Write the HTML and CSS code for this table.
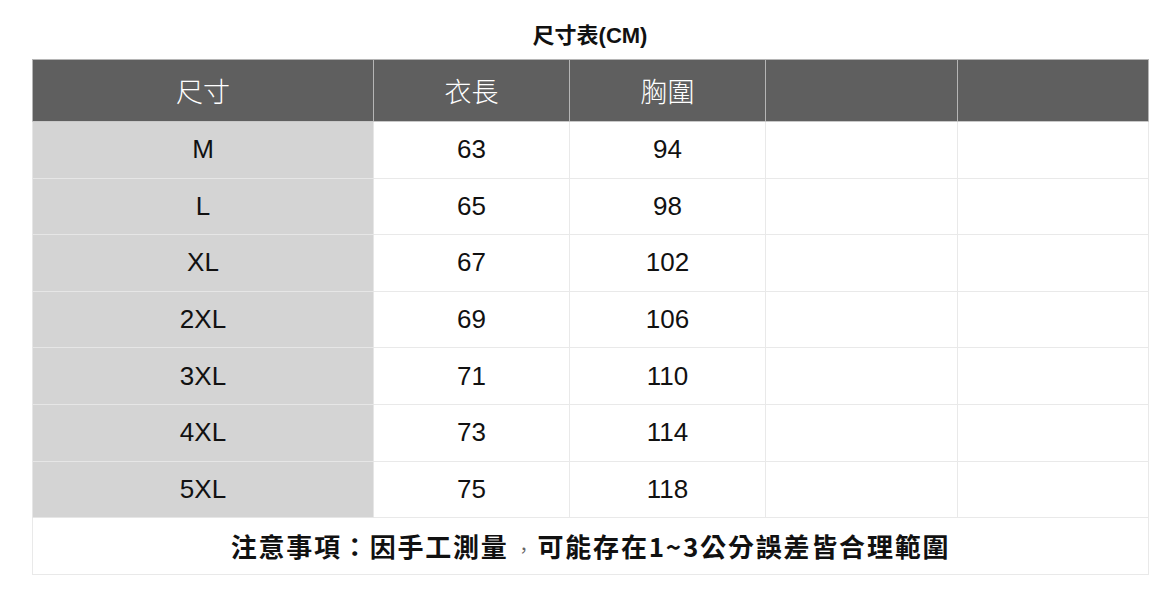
FILE: index.html
```html
<!DOCTYPE html>
<html lang="zh-Hant">
<head>
<meta charset="utf-8">
<link rel="stylesheet" href="styles.css">
</head>
<body>
<div class="page">
  <div class="title">尺寸表(CM)</div>
  <table class="size-table">
    <colgroup>
      <col class="c1"><col class="c2"><col class="c3"><col class="c4"><col class="c5">
    </colgroup>
    <thead>
      <tr><th>尺寸</th><th>衣長</th><th>胸圍</th><th></th><th></th></tr>
    </thead>
    <tbody>
      <tr><td class="size">M</td><td>63</td><td>94</td><td></td><td></td></tr>
      <tr><td class="size">L</td><td>65</td><td>98</td><td></td><td></td></tr>
      <tr><td class="size">XL</td><td>67</td><td>102</td><td></td><td></td></tr>
      <tr><td class="size">2XL</td><td>69</td><td>106</td><td></td><td></td></tr>
      <tr><td class="size">3XL</td><td>71</td><td>110</td><td></td><td></td></tr>
      <tr><td class="size">4XL</td><td>73</td><td>114</td><td></td><td></td></tr>
      <tr><td class="size">5XL</td><td>75</td><td>118</td><td></td><td></td></tr>
      <tr><td class="note" colspan="5">注意事項：因手工測量<span class="comma">，</span>可能存在1~3公分誤差皆合理範圍</td></tr>
    </tbody>
  </table>
</div>
</body>
</html>
```
FILE: styles.css
```css
html, body { margin: 0; padding: 0; background: #fff; }
body { font-family: "Liberation Sans", "Noto Sans CJK TC", sans-serif; color: #111; }
.page { padding: 21px 0 0 32px; }
.title {
  width: 1116px;
  text-align: center;
  font-weight: bold;
  font-size: 22px;
  line-height: 30px;
  height: 38px;
  color: #111;
}
.size-table {
  border-collapse: collapse;
  table-layout: fixed;
  width: 1116px;
}
.c1 { width: 341px; }
.c2 { width: 196px; }
.c3 { width: 196px; }
.c4 { width: 192px; }
.c5 { width: 191px; }
.size-table th {
  background: #5f5f5f;
  color: #fff;
  font-family: "Noto Sans CJK TC", sans-serif;
  font-weight: 300;
  font-size: 27px;
  height: 61px;
  padding: 0;
  border: 1px solid #b5b5b5;
  border-bottom-color: #c8c8c8;
}
.size-table td {
  height: 55.6px;
  padding: 0;
  text-align: center;
  font-size: 26px;
  border: 1px solid #e9e9e9;
  color: #111;
}
.size-table td.size {
  background: #d4d4d4;
  border-color: #e6e6e6;
}
.size-table td.note {
  height: 55.6px;
  font-family: "Noto Sans CJK TC", sans-serif;
  font-weight: bold;
  font-size: 26px;
  letter-spacing: 1.8px;
}
.comma { font-weight: normal; color: #666; font-size: 18px; margin: 0 3px 0 6px; }
```
